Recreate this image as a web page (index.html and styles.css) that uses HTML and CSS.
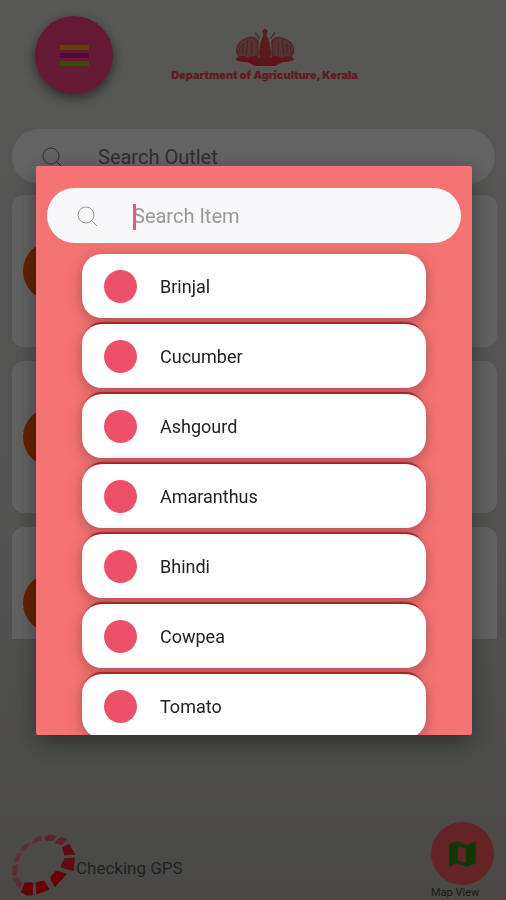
FILE: index.html
```html
<!DOCTYPE html>
<html lang="en">
<head>
  <meta charset="utf-8">
  <meta name="viewport" content="width=device-width, initial-scale=1">
  <title>Department of Agriculture, Kerala</title>
  <link rel="stylesheet" href="styles.css">
</head>
<body>

  <div class="page">
    <header class="header">
      <button class="menu-button" aria-label="Menu">
        <span class="bar bar-orange"></span>
        <span class="bar bar-purple"></span>
        <span class="bar bar-green"></span>
      </button>
      <div class="brand">
        <!-- Emblem: two elephants around the conch -->
        <svg class="emblem" viewBox="0 0 180 120" aria-hidden="true">
          <g fill="#c4545a" opacity="0.6">
            <path d="M6 84C2 56 12 38 30 34c14-12 38-10 42 6v50H10z"/>
            <path d="M174 84c4-28-6-46-24-50-14-12-38-10-42 6v50h62z"/>
          </g>
          <path d="M82 8l8-6 8 6-3 14 8 20 6 34-6 20H77l-6-20 6-34 8-20z" fill="#e0444e"/>
          <path d="M6 78C2 56 12 38 30 34c14-10 30-6 38 6l-2 44" fill="none" stroke="#e0545c" stroke-width="4"/>
          <path d="M174 78c4-22-6-40-24-44-14-10-30-6-38 6l2 44" fill="none" stroke="#e0545c" stroke-width="4"/>
          <path d="M24 46v30M38 36l-4 44M50 40v40M60 14l14 18M16 52l-6 30" fill="none" stroke="#d4545c" stroke-width="4"/>
          <path d="M156 46v30M142 36l4 44M130 40v40M120 14l-14 18M164 52l6 30" fill="none" stroke="#d4545c" stroke-width="4"/>
          <path d="M2 94c14-16 28-10 38-4 14-10 26-8 34 0h32c8-8 20-10 34 0 10-6 24-12 38 4-8 8-20 8-34 8l-24 12H60L36 102C22 102 10 102 2 94z" fill="#e83442"/>
        </svg>
        <div class="brand-name">Department of Agriculture, Kerala</div>
      </div>
    </header>

    <label class="search search-outlet">
      <svg class="search-icon" viewBox="0 0 20 20" aria-hidden="true"><circle cx="9" cy="9" r="8"/><path d="M14.500 14.500L20 20"/></svg>
      <input type="text" placeholder="Search Outlet" aria-label="Search Outlet">
    </label>

    <div class="outlets">
      <div class="outlet"><span class="outlet-dot"></span></div>
      <div class="outlet"><span class="outlet-dot"></span></div>
      <div class="outlet"><span class="outlet-dot"></span></div>
    </div>

    <footer class="footer">
      <div class="gps">
        <svg class="spinner" viewBox="36 66 192 186" aria-hidden="true">
          <g fill="#ff0010" stroke="#ff0010">
            <path d="M64 240l11-27h23l-1 36H80z"/>
            <path d="M108 212l24-5 15 25-37 14z"/>
            <path d="M151 197l18-20 30 9-34 37z"/>
          </g>
          <g fill="#f2202e" stroke="#f2202e">
            <path d="M183 165l11-25 29-2-3 38z"/>
            <path d="M188 106l19-9 17 30-30 2z"/>
          </g>
          <g fill="#ec5462" stroke="#ec5462">
            <path d="M165 92l15-16 21 6-16 16z"/>
            <path d="M134 77l16-8 18 4-7 11-21 1z"/>
          </g>
          <g fill="#e8707a" stroke="#e8707a">
            <path d="M96 93l12-15 17-6-3 13z"/>
            <path d="M63 115l9-14 16-6-10 18z"/>
            <path d="M42 150l10-23 12-4-9 23z"/>
            <path d="M38 190l2-29 11-3v29z"/>
            <path d="M38 200l14-4 14 18-8 16z"/>
          </g>
        </svg>
        <span class="gps-text">Checking GPS</span>
      </div>
      <button class="map-button">
        <span class="map-circle">
          <svg class="map-icon" viewBox="145 119 82 80" aria-hidden="true">
            <path fill-rule="evenodd" d="M145 130l5-6 22-4 28 11 27-11v68l-29 10-28-10-25 10zM172 134v44l24 9v-44z"/>
          </svg>
        </span>
        <span class="map-label">Map View</span>
      </button>
    </footer>
  </div>

  <div class="overlay">
    <div class="dialog" role="dialog" aria-label="Select item">
      <label class="search search-item">
        <svg class="search-icon" viewBox="0 0 20 20" aria-hidden="true"><circle cx="9" cy="9" r="8"/><path d="M14.500 14.500L20 20"/></svg>
        <span class="field">
          <input type="text" placeholder="Search Item" aria-label="Search Item">
          <span class="caret"></span>
        </span>
      </label>
      <div class="items">
        <button class="item"><span class="item-dot"></span>Brinjal</button>
        <button class="item"><span class="item-dot"></span>Cucumber</button>
        <button class="item"><span class="item-dot"></span>Ashgourd</button>
        <button class="item"><span class="item-dot"></span>Amaranthus</button>
        <button class="item"><span class="item-dot"></span>Bhindi</button>
        <button class="item"><span class="item-dot"></span>Cowpea</button>
        <button class="item"><span class="item-dot"></span>Tomato</button>
      </div>
    </div>
  </div>

</body>
</html>
```
FILE: styles.css
```css
* {
  box-sizing: border-box;
}

body {
  margin: 0;
  font-family: Roboto, "Liberation Sans", sans-serif;
}

button {
  border: none;
  padding: 0;
  background: none;
  font-family: inherit;
  cursor: pointer;
}

.page {
  display: flex;
  flex-direction: column;
  height: 100vh;
  overflow: hidden;
  background: linear-gradient(#d9d9d6, #cfcfcb 60%, #b6b4ac);
}

/* Header */
.header {
  display: grid;
  grid-template-columns: 78px 1fr 78px;
  align-items: start;
  padding: 16px 12px 0 35px;
  height: 129px;
}

.menu-button {
  display: flex;
  flex-direction: column;
  align-items: center;
  justify-content: center;
  gap: 3px;
  width: 78px;
  height: 78px;
  border-radius: 50%;
  background: #ff3f86;
  box-shadow: 0 4px 12px rgba(0, 0, 0, 0.5);
}

.bar {
  width: 29px;
  height: 5px;
}

.bar-orange { background: #f5a010; }
.bar-purple { background: #c2109c; }
.bar-green { background: #7ec022; }

.brand {
  display: flex;
  flex-direction: column;
  align-items: center;
  padding-top: 12px;
}

.emblem {
  width: 60px;
  height: 40px;
}

.brand-name {
  font-family: Inter, "Liberation Sans", sans-serif;
  font-size: 11px;
  font-weight: 900;
  line-height: 14px;
  color: #f04452;
  white-space: nowrap;
}

/* Search boxes */
.search {
  display: flex;
  flex: none;
  align-items: center;
  height: 55px;
  padding: 0 30px;
  gap: 36px;
  border-radius: 28px;
  background: #f8f8fa;
}

.search-outlet {
  margin: 0 11px 0 12px;
}

.search-icon {
  flex: none;
  width: 20px;
  height: 20px;
  fill: none;
  stroke: #999;
  stroke-width: 1;
}

.search-outlet .search-icon {
  stroke: #777;
}

.search input {
  width: 100%;
  padding: 0;
  border: none;
  outline: none;
  background: none;
  font-family: inherit;
  font-size: 20px;
  line-height: 24px;
}

.search input::placeholder {
  color: #999;
  opacity: 1;
}

.search-outlet input::placeholder {
  color: #777;
}

.field {
  position: relative;
  flex: 1;
}

.caret {
  position: absolute;
  left: 0;
  top: 0;
  width: 3px;
  height: 26px;
  background: #f0508a;
}

/* Outlet cards */
.outlets {
  display: flex;
  flex-direction: column;
  gap: 14px;
  height: 444px;
  margin-top: 11px;
  padding: 0 9px 0 12px;
  overflow: hidden;
}

.outlet {
  display: flex;
  flex: none;
  align-items: center;
  height: 152px;
  padding: 0 11px;
  border-radius: 12px;
  background: #f4f4f4;
}

.outlet-dot {
  width: 60px;
  height: 60px;
  border-radius: 50%;
  background: #ff5500;
}

/* Footer */
.footer {
  display: flex;
  justify-content: space-between;
  align-items: flex-start;
  margin-top: auto;
  padding: 0 12px;
}

.gps {
  display: flex;
  align-items: center;
  padding-top: 12px;
}

.gps-text {
  padding-top: 6px;
  font-size: 17px;
  color: #555;
}

.spinner {
  width: 64px;
  height: 62px;
  stroke-width: 3;
  stroke-linejoin: round;
}

.map-button {
  display: flex;
  flex-direction: column;
  align-items: flex-start;
  gap: 1px;
}

.map-circle {
  display: flex;
  align-items: center;
  justify-content: center;
  width: 63px;
  height: 63px;
  border-radius: 50%;
  background: #fb5a5e;
}

.map-icon {
  width: 27px;
  height: 26px;
  fill: #2c8c14;
}

.map-label {
  font-size: 11px;
  line-height: 14px;
  color: #444;
}

/* Dialog */
.overlay {
  position: fixed;
  inset: 0;
  display: flex;
  padding: 166px 34px 165px 36px;
  background: rgba(0, 0, 0, 0.6);
}

.dialog {
  flex: 1;
  padding: 22px 11px 0;
  border-radius: 2px;
  background: #f67373;
  box-shadow: 0 8px 24px rgba(0, 0, 0, 0.4);
  overflow: hidden;
}

.items {
  display: flex;
  flex-direction: column;
  gap: 6px;
  padding: 11px 35px 0;
}

.item {
  display: flex;
  flex: none;
  align-items: center;
  gap: 23px;
  height: 64px;
  padding: 0 22px;
  border-radius: 20px;
  background: #fff;
  box-shadow: 0 3px 14px rgba(60, 30, 30, 0.4);
  font-size: 18px;
  color: #222;
}

/* dark line where one card meets the next */
.item + .item {
  box-shadow: 0 -4px 1px -2px #a82226, 0 3px 14px rgba(60, 30, 30, 0.4);
}

.item-dot {
  width: 33px;
  height: 33px;
  border-radius: 50%;
  background: #eb5068;
}
```
